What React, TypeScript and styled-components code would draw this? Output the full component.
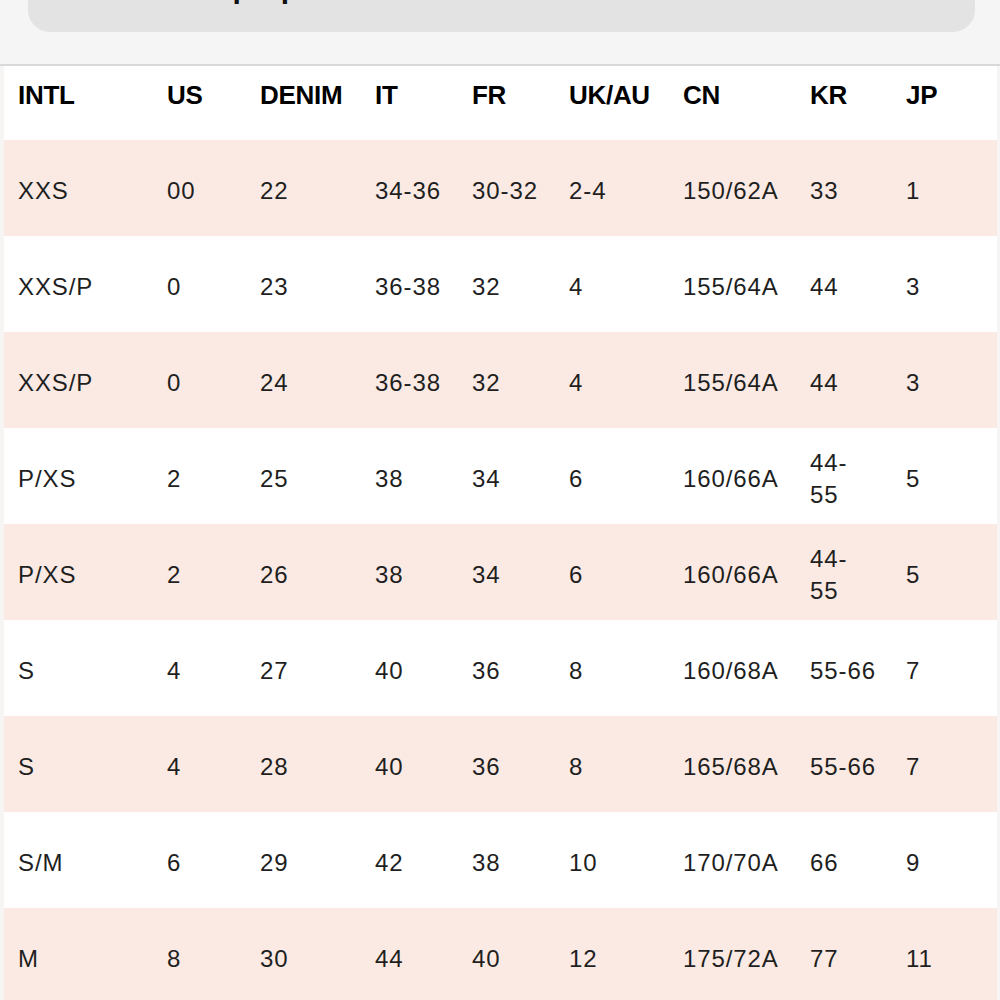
import React from "react";
import styled, { createGlobalStyle } from "styled-components";

const Global = createGlobalStyle`
  html, body {
    margin: 0;
    padding: 0;
    background: #f6f5f4;
    font-family: "Liberation Sans", Arial, Helvetica, sans-serif;
    overflow: hidden;
  }
`;

const Page = styled.div`
  width: 1000px;
  height: 1000px;
  overflow: hidden;
  display: flex;
  flex-direction: column;
`;

const TopArea = styled.div`
  height: 64px;
  flex: none;
  background: #f5f5f5;
  border-bottom: 2px solid #d9d9d9;
  padding: 0 25px 0 28px;
  display: flex;
  flex-direction: column;
`;

const TitleBox = styled.div`
  margin-top: -48px;
  height: 80px;
  background: #e3e3e3;
  border-radius: 22px;
  display: flex;
  align-items: flex-end;
  padding: 0 0 29px 170px;
  box-sizing: border-box;
  overflow: hidden;
`;

const Title = styled.h1`
  margin: 0;
  font-size: 30px;
  line-height: 30px;
  font-weight: 700;
  color: #111;
`;

const TableWrap = styled.div`
  flex: 1;
  padding: 0 3px 0 4px;
  background: #f7f5f3;
`;

const Table = styled.div`
  background: #ffffff;
  display: flex;
  flex-direction: column;
`;

const cols = "163px 93px 115px 97px 97px 114px 127px 96px 91px";

const HeaderRow = styled.div`
  display: grid;
  grid-template-columns: ${cols};
  height: 74px;
  box-sizing: border-box;
  padding-top: 14px;
  align-items: start;
  background: #fff;
`;

const HeadCell = styled.div<{ $first?: boolean }>`
  padding-left: ${(p) => (p.$first ? "14px" : "0")};
  font-size: 26px;
  line-height: 30px;
  font-weight: 700;
  color: #000;
  letter-spacing: -0.3px;
`;

const Row = styled.div<{ $shaded: boolean }>`
  display: grid;
  grid-template-columns: ${cols};
  height: 96px;
  box-sizing: border-box;
  padding-top: 5px;
  flex: none;
  align-items: center;
  background: ${(p) => (p.$shaded ? "#fbeae3" : "#ffffff")};
`;

const Cell = styled.div<{ $first?: boolean }>`
  padding-left: ${(p) => (p.$first ? "14px" : "0")};
  font-size: 24px;
  line-height: 32px;
  font-weight: 400;
  letter-spacing: 0.9px;
  color: #1f1f1f;
  white-space: pre-line;
`;

const headers = ["INTL", "US", "DENIM", "IT", "FR", "UK/AU", "CN", "KR", "JP"];

const rows: string[][] = [
  ["XXS", "00", "22", "34-36", "30-32", "2-4", "150/62A", "33", "1"],
  ["XXS/P", "0", "23", "36-38", "32", "4", "155/64A", "44", "3"],
  ["XXS/P", "0", "24", "36-38", "32", "4", "155/64A", "44", "3"],
  ["P/XS", "2", "25", "38", "34", "6", "160/66A", "44-\n55", "5"],
  ["P/XS", "2", "26", "38", "34", "6", "160/66A", "44-\n55", "5"],
  ["S", "4", "27", "40", "36", "8", "160/68A", "55-66", "7"],
  ["S", "4", "28", "40", "36", "8", "165/68A", "55-66", "7"],
  ["S/M", "6", "29", "42", "38", "10", "170/70A", "66", "9"],
  ["M", "8", "30", "44", "40", "12", "175/72A", "77", "11"],
];

export default function App() {
  return (
    <Page>
      <Global />
      <TopArea>
        <TitleBox>
          <Title>Top Up</Title>
        </TitleBox>
      </TopArea>
      <TableWrap>
        <Table>
          <HeaderRow>
            {headers.map((h, i) => (
              <HeadCell key={h} $first={i === 0}>
                {h}
              </HeadCell>
            ))}
          </HeaderRow>
          {rows.map((r, ri) => (
            <Row key={ri} $shaded={ri % 2 === 0}>
              {r.map((c, ci) => (
                <Cell key={ci} $first={ci === 0}>
                  {c}
                </Cell>
              ))}
            </Row>
          ))}
        </Table>
      </TableWrap>
    </Page>
  );
}
